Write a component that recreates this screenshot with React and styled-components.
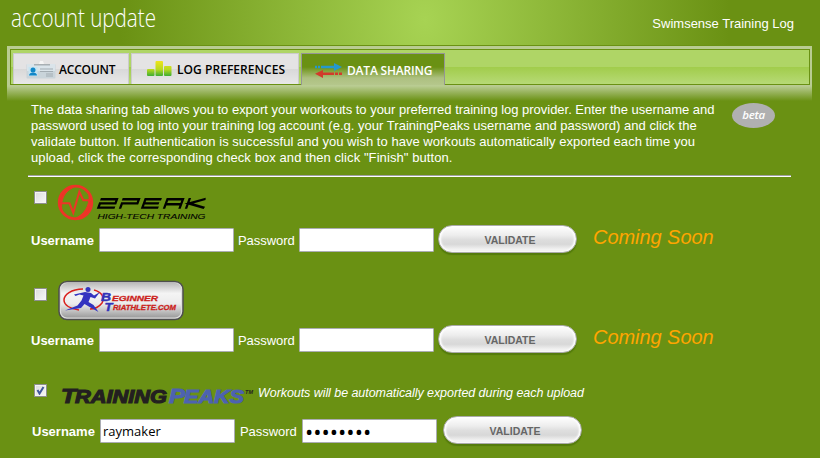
import React, { useState } from 'react';
import styled, { createGlobalStyle } from 'styled-components';

const GlobalStyle = createGlobalStyle`
    * {
        box-sizing: border-box;
    }
    body {
        margin: 0;
        background: #6a9113;
        color: #fff;
        font: 13px/16px 'Liberation Sans', Arial, sans-serif;
    }
    svg {
        flex: none;
        overflow: visible;
    }
`;

const Page = styled.div`
    width: 820px;
    height: 458px;
    overflow: hidden;
    display: flex;
    flex-direction: column;
`;

const Header = styled.header`
    height: 45px;
    flex: none;
    display: flex;
    justify-content: space-between;
    padding: 0 26px 0 11px;
    background: radial-gradient(ellipse 305px 400px at 425px 20px, #a7d353, #6a9113);
`;

const Title = styled.h1`
    margin: 0;
    height: 40px;
`;

const Product = styled.div`
    padding-top: 16px;
`;

const Nav = styled.nav`
    height: 56px;
    flex: none;
    margin: 0 8px 0 7px;
    padding: 3px 2px 0 3px;
    border-top: 1px solid #6a9113;
    background: linear-gradient(#b9cc92 0 40px, #6a9113 55px);
`;

const TabBar = styled.div`
    height: 36px;
    display: flex;
    align-items: flex-end;
    gap: 2px;
    padding-left: 2px;
    border: 1px solid #6a9113;
    background: linear-gradient(#afd566 0 17px, #a1cc4b 17px, #b7da76);
`;

const Tab = styled.button`
    height: ${({ $active }) => ($active ? '32px' : '31px')};
    width: ${({ $width }) => $width}px;
    margin: ${({ $active }) => ($active ? '0 0 -1px' : '0')};
    padding: 1px 0 0 ${({ $pad }) => $pad}px;
    display: flex;
    align-items: center;
    gap: ${({ $gap }) => $gap}px;
    border: ${({ $active }) => ($active ? '1px solid #959595' : '1px solid #cbcbcb')};
    border-bottom: 0;
    background: ${({ $active }) =>
        $active
            ? 'linear-gradient(#6a9113 0 13px, #adc080 24px, #b5c78c)'
            : 'linear-gradient(#e4e3e4 0 15px, #d8d8d8 15px, #e8e8e8)'};
    color: ${({ $active }) => ($active ? '#fff' : '#000')};
    font: 600 12px 'Open Sans', sans-serif;
    letter-spacing: ${({ $track }) => $track}px;
    white-space: nowrap;
`;

const Content = styled.main`
    padding: 1px 29px 0 28px;
`;

const Intro = styled.div`
    display: flex;
    justify-content: space-between;
    padding: 0 16px 0 3px;
`;

const Copy = styled.p`
    margin: 0;
    white-space: nowrap;
`;

const Line = styled.span`
    display: block;
    letter-spacing: ${({ $track }) => $track}px;
`;

const Beta = styled.div`
    width: 43px;
    height: 25px;
    margin-top: 1px;
    border-radius: 50%;
    background: #b0b0b0;
    font: italic 600 11.5px/24px 'Open Sans', sans-serif;
    letter-spacing: -0.3px;
    text-align: center;
`;

const Divider = styled.div`
    height: 2px;
    margin-top: 9px;
    border-top: 1px solid #a0a0a0;
    border-bottom: 1px solid #fff;
    width: 763px;
`;

const Provider = styled.section`
    height: ${({ $height }) => $height}px;
    padding-left: 3px;
`;

const Brand = styled.div`
    height: ${({ $height }) => $height}px;
    display: flex;
    align-items: flex-start;
    padding: ${({ $top }) => $top}px 0 0 3px;
`;

const Check = styled.button`
    width: 13px;
    height: 13px;
    padding: 0;
    margin: ${({ $top }) => $top}px 0 0;
    flex: none;
    display: flex;
    border: 1px solid #8e8f8f;
    outline: 1px solid #f4f4f4;
    outline-offset: -2px;
    background: linear-gradient(135deg, #dcdcdc, #f8f8f8);
`;

const Logo = styled.div`
    margin: ${({ $top }) => $top}px 0 0 ${({ $left }) => $left}px;
    display: flex;
`;

const Note = styled.em`
    margin: 2px 0 0 2px;
    font-size: 12.5px;
    letter-spacing: -0.06px;
    white-space: nowrap;
`;

const Fields = styled.div`
    height: 32px;
    display: flex;
    align-items: center;
    padding-left: ${({ $shift }) => $shift}px;
`;

const Label = styled.label`
    width: ${({ $width }) => $width}px;
    padding-top: 1px;
    font-weight: ${({ $bold }) => ($bold ? 'bold' : 'normal')};
    font-size: 13px;
    letter-spacing: ${({ $bold }) => ($bold ? '0' : '-0.05px')};
`;

const Input = styled.input`
    width: 135px;
    height: 24px;
    margin-right: ${({ $gap }) => $gap}px;
    padding: 1px 2px;
    border: 1px solid #abadb3;
    border-radius: 1px;
    background: #fff;
    color: #000;
    font: ${({ type }) => (type === 'password' ? '22px' : '13px')} 'Open Sans', sans-serif;
`;

const Validate = styled.button`
    width: 139px;
    height: 28px;
    margin-top: -2px;
    padding: 2px 0 0 5px;
    border: 1px solid #aaa;
    border-radius: 14px;
    background: linear-gradient(#fff, #ededed 35%, #dedede 52%, #d8d8d8 70%, #f2f2f2 90%);
    box-shadow: inset 2px 0 2px #fff, inset -2px 0 2px #fff, 0 2px 1px #547b0c;
    color: #666;
    font: bold 10.5px 'Liberation Sans', Arial, sans-serif;
`;

const Soon = styled.em`
    margin: -6px 0 0 16px;
    color: #ffa500;
    font-size: 20px;
    line-height: 24px;
    letter-spacing: -0.05px;
    white-space: nowrap;
`;

const CardIcon = () => (
    <svg width="30" height="19" viewBox="0 0 30 19">
        <rect x=".5" y="4" width="29" height="14.5" rx="1" fill="#c9d4da" />
        <rect x="1" y="4" width="28" height="7" fill="#dae4ea" />
        <path d="M13 4l1-3h3l1 3z" fill="#f5f5f5" />
        <rect x="8" y="4" width="16" height="1.5" fill="#a8afb3" />
        <rect x="2.5" y="7" width="9" height="9" fill="#c5e4f2" />
        <circle cx="7" cy="10" r="2.5" fill="#1287c8" />
        <path d="M3 15.5c0-4 8-4 8 0z" fill="#1287c8" />
        <path d="M14 9h13M14 11.5h13M20 14h7M20 16h7" stroke="#a2acb2" />
    </svg>
);

const BarsIcon = () => (
    <svg width="26" height="17" viewBox="0 0 26 17">
        <defs>
            <linearGradient id="bars" x1="0" y1="0" x2="0" y2="17" gradientUnits="userSpaceOnUse">
                <stop offset="0" stopColor="#f0e51b" />
                <stop offset=".5" stopColor="#b8d920" />
                <stop offset="1" stopColor="#18a038" />
            </linearGradient>
        </defs>
        <g fill="url(#bars)">
            <rect x="0" y="8" width="7.5" height="7" rx="1" />
            <rect x="8.5" y="0" width="7.5" height="15" rx="1" />
            <rect x="17" y="5" width="7.5" height="10" rx="1" />
        </g>
    </svg>
);

const ArrowsIcon = () => (
    <svg width="28" height="15" viewBox="0 0 28 15">
        <path d="M7 2.700h12V0l8 4-8 4V5.300H7z" fill="#2498cf" />
        <path d="M0 4h7" stroke="#2498cf" strokeWidth="2.400" strokeDasharray="2 1" />
        <path d="M19 9.500H8V7L0 10.800 8 15v-3h11z" fill="#d23a2b" />
        <path d="M20 10.800h7.500" stroke="#d23a2b" strokeWidth="2.400" strokeDasharray="3 1" />
    </svg>
);

const PeakLogo = () => (
    <svg width="152" height="38" viewBox="0 0 152 38">
        <circle cx="19.500" cy="18.500" r="16.300" fill="none" stroke="#ee3427" strokeWidth="2.800" />
        <path d="M33 10c5 10-1 23-14 24.500 9-4 15-12 14-24.500zM6 27C1 17 7 5 18 3 9 7 4 15 6 27z" fill="#ee3427" stroke="#ee3427" />
        <path
            d="M4 19.300h9.500l3.800 9.500 6-21 4 8.500h8.500"
            fill="none"
            stroke="#ee3427"
            strokeWidth="2"
        />
        <g transform="skewX(-20)" fill="none" stroke="#000" strokeWidth="2.400">
            <path d="M50 15.200h16.500v4.200H51v4.200h16.500M73 24.800v-5.400h15.500v-4.200H71.800M111 15.200H95v8.400h16M95 19.400h15M117 24.800v-9.600h15.500v9.600M117 20.200h15.500" />
            <path d="M139 14v10.800M155 14.800l-15 4.700 17 4.300" />
        </g>
        <text
            x="41.500"
            y="35"
            textLength="108"
            lengthAdjust="spacingAndGlyphs"
            fontFamily="Liberation Sans"
            fontSize="7.800"
            fontStyle="italic"
            stroke="#000"
            strokeWidth=".1"
        >
            HIGH-TECH TRAINING
        </text>
    </svg>
);

const BeginnerLogo = () => (
    <svg width="126" height="41" viewBox="0 0 126 41" fontFamily="Liberation Sans" fontStyle="italic" fontWeight="bold">
        <defs>
            <linearGradient id="plate" x1="0" y1="0" x2="0" y2="1">
                <stop offset="0" stopColor="#bbb" />
                <stop offset=".3" stopColor="#f4f4f4" />
                <stop offset=".6" stopColor="#ececec" />
                <stop offset="1" stopColor="#9c9c9c" />
            </linearGradient>
        </defs>
        <rect x="1" y="1.500" width="124" height="38" rx="8" fill="#ddd" stroke="#4e4e4e" strokeWidth="1.5" />
        <rect x="3" y="3" width="120" height="34.500" rx="6" fill="url(#plate)" />
        <path
            d="M25 9C13 9 6 15 6 20s6 9 15 10M36 10c8 2 11 8 8 13-3 4-8 6-12 6"
            fill="none"
            stroke="#d9211e"
            strokeWidth="1.5"
        />
        <circle cx="30" cy="9.500" r="2.500" fill="#3333c0" />
        <path
            d="M16 14.500l11-2.500 6 1 3 2.500 6-3.500-5 6.500-4.500-1.500-2 5 5 3 5 7-8-4.500-6-3.500-3.500 4-16 2.500 12.500-5 4-5 2-5-4-1-4 1.500z"
            fill="#3333c0"
        />
        <g fill="#3333b8" stroke="#3333b8" strokeWidth=".5">
            <text x="43" y="20.500" fontSize="11.500" textLength="10" lengthAdjust="spacingAndGlyphs">B</text>
            <text x="46.500" y="30.500" fontSize="11.500" textLength="8" lengthAdjust="spacingAndGlyphs">T</text>
        </g>
        <g fill="#cc1f1c" stroke="#cc1f1c" strokeWidth=".3">
            <text x="54" y="20.500" fontSize="8" textLength="46" lengthAdjust="spacingAndGlyphs">EGINNER</text>
            <text x="55" y="29.500" fontSize="8" textLength="63" lengthAdjust="spacingAndGlyphs">RIATHLETE.COM</text>
        </g>
    </svg>
);

const TrainingLogo = () => (
    <svg width="194" height="20" viewBox="0 0 194 20" fontFamily="Liberation Sans" fontStyle="italic" fontWeight="bold">
        <g fill="#231f20" stroke="#231f20" strokeWidth="1.100">
            <text x="-1" y="17.500" fontSize="21" textLength="15" lengthAdjust="spacingAndGlyphs">T</text>
            <text x="13" y="17.500" fontSize="18" textLength="92" lengthAdjust="spacingAndGlyphs">RAINING</text>
        </g>
        <g fill="#4d62b0" stroke="#4d62b0" strokeWidth="1.100">
            <text x="107" y="17.500" fontSize="21" textLength="16" lengthAdjust="spacingAndGlyphs">P</text>
            <text x="122" y="17.500" fontSize="18" textLength="60" lengthAdjust="spacingAndGlyphs">EAKS</text>
        </g>
        <text x="183" y="8.500" fontSize="5.500" fill="#231f20" textLength="8">TM</text>
    </svg>
);

const copy = [
    ['The data sharing tab allows you to export your workouts to your preferred training log provider. Enter the username and', -0.02],
    ['password used to log into your training log account (e.g. your TrainingPeaks username and password) and click the', 0.02],
    ['validate button. If authentication is successful and you wish to have workouts automatically exported each time you', 0.03],
    ['upload, click the corresponding check box and then click "Finish" button.', 0.085],
];

const Credentials = ({ shift = 0, soon, user = '', pass = '' }) => (
    <Fields $shift={shift}>
        <Label $bold $width={68}>Username</Label>
        <Input defaultValue={user} $gap={shift ? 5 : 4} />
        <Label $width={shift ? 62 : 61}>Password</Label>
        <Input type="password" defaultValue={pass} $gap={shift ? 6 : 4} />
        <Validate>VALIDATE</Validate>
        {soon && <Soon>Coming Soon</Soon>}
    </Fields>
);

const App = () => {
    const [synced, setSynced] = useState(true);

    return (
        <Page>
            <GlobalStyle />
            <Header>
                <Title>
                    <svg width="160" height="40">
                        <text
                            x="0"
                            y="27"
                            fill="#fff"
                            fontFamily="Open Sans"
                            fontWeight="300"
                            fontSize="25"
                            textLength="145"
                            lengthAdjust="spacingAndGlyphs"
                        >
                            account update
                        </text>
                    </svg>
                </Title>
                <Product>Swimsense Training Log</Product>
            </Header>
            <Nav>
                <TabBar>
                    <Tab $width={116} $pad={12} $gap={3} $track={-0.2}>
                        <CardIcon /> ACCOUNT
                    </Tab>
                    <Tab $width={168} $pad={15} $gap={4} $track={0.05}>
                        <BarsIcon /> LOG PREFERENCES
                    </Tab>
                    <Tab $active $width={144} $pad={13} $gap={4} $track={-0.2}>
                        <ArrowsIcon /> DATA SHARING
                    </Tab>
                </TabBar>
            </Nav>
            <Content>
                <Intro>
                    <Copy>
                        {copy.map(([text, track]) => (
                            <Line key={text} $track={track}>{text}</Line>
                        ))}
                    </Copy>
                    <Beta>beta</Beta>
                </Intro>
                <Divider />
                <Provider $height={97}>
                    <Brand $height={47} $top={7}>
                        <Check $top={7} />
                        <Logo $top={0} $left={9}><PeakLogo /></Logo>
                    </Brand>
                    <Credentials soon />
                </Provider>
                <Provider $height={100}>
                    <Brand $height={50} $top={5}>
                        <Check $top={9} />
                        <Logo $top={1} $left={11}><BeginnerLogo /></Logo>
                    </Brand>
                    <Credentials soon />
                </Provider>
                <Provider $height={85}>
                    <Brand $height={41} $top={9}>
                        <Check $top={1} onClick={() => setSynced(!synced)}>
                            {synced && (
                                <svg width="11" height="11">
                                    <path d="M2.500 5l2 3.500L8.500 2" fill="none" stroke="#41589c" strokeWidth="2" />
                                </svg>
                            )}
                        </Check>
                        <Logo $top={2} $left={15}><TrainingLogo /></Logo>
                        <Note>Workouts will be automatically exported during each upload</Note>
                    </Brand>
                    <Credentials shift={1} user="raymaker" pass="password" />
                </Provider>
            </Content>
        </Page>
    );
};

export default App;
